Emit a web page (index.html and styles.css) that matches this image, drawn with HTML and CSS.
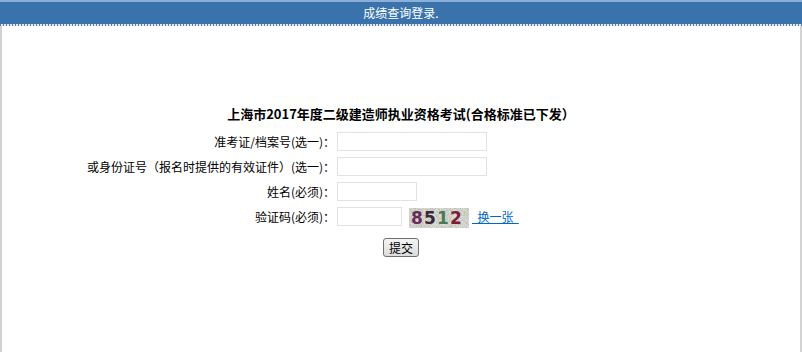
FILE: index.html
```html
<!DOCTYPE html>
<html lang="zh-CN">
<head>
<meta charset="utf-8">
<title>成绩查询登录</title>
<link rel="stylesheet" href="styles.css">
</head>
<body>
<div class="page">
  <div class="topline"></div>
  <div class="header">成绩查询登录.</div>
  <div class="dots"></div>
  <div class="main">
    <h1 class="title">上海市2017年度二级建造师执业资格考试(合格标准已下发）</h1>
    <div class="form">
      <label class="lbl">准考证/档案号(选一)：</label>
      <div class="field"><input class="inp inp-long" type="text"></div>
      <label class="lbl">或身份证号（报名时提供的有效证件）(选一)：</label>
      <div class="field"><input class="inp inp-long" type="text"></div>
      <label class="lbl">姓名(必须)：</label>
      <div class="field"><input class="inp inp-mid" type="text"></div>
      <label class="lbl">验证码(必须)：</label>
      <div class="field field-code">
        <input class="inp inp-short" type="text">
        <svg class="captcha" width="60" height="20" viewBox="0 0 60 20">
          <defs>
            <filter id="noise" x="0" y="0" width="100%" height="100%">
              <feTurbulence type="fractalNoise" baseFrequency="1.2" numOctaves="2" seed="7"/>
              <feColorMatrix type="matrix" values="0 0 0 0 0.42  0 0 0 0 0.5  0 0 0 0 0.42  0 0 0 3 -1.3"/>
            </filter>
            <filter id="noise2" x="0" y="0" width="100%" height="100%">
              <feTurbulence type="fractalNoise" baseFrequency="1.1" numOctaves="1" seed="21"/>
              <feColorMatrix type="matrix" values="0 0 0 0 0.88  0 0 0 0 0.72  0 0 0 0 0.78  0 0 0 3 -1.3"/>
            </filter>
          </defs>
          <rect width="60" height="20" fill="#d6d8d0"/>
          <rect width="60" height="20" filter="url(#noise2)"/>
          <rect width="60" height="20" filter="url(#noise)"/>
          <text x="2" y="16" class="cd" fill="#6b2a5c">8</text>
          <text x="15" y="16" class="cd" fill="#3a2836">5</text>
          <text x="28" y="16" class="cd" fill="#4b7855">1</text>
          <text x="41" y="16" class="cd" fill="#7a2035">2</text>
        </svg>
        <a class="change" href="#">&nbsp;&nbsp;换一张&nbsp;&nbsp;</a>
      </div>
    </div>
    <div class="actions"><button class="btn" type="button">提交</button></div>
  </div>
</div>
</body>
</html>
```

FILE: styles.css
```css
html, body {
  margin: 0;
  padding: 0;
  background: #ffffff;
}

body {
  font-family: "Noto Sans CJK SC", "Liberation Sans", sans-serif;
  font-size: 12px;
  color: #000;
}

.page {
  width: 802px;
  height: 352px;
  display: flex;
  flex-direction: column;
  overflow: hidden;
}

.topline {
  height: 2px;
  background: #8bafd8;
}

.header {
  height: 22px;
  line-height: 22px;
  background: #3a73ab;
  color: #ffffff;
  text-align: center;
  font-size: 12px;
}

.dots {
  height: 2px;
  background: repeating-linear-gradient(90deg, #5a7ca3 0 1px, #e4eaf1 1px 3px);
}

.main {
  flex: 1;
  border-left: 2px solid #d3d3d3;
  border-right: 2px solid #d3d3d3;
  display: flex;
  flex-direction: column;
}

.title {
  margin: 78px 0 5px;
  font-size: 13px;
  line-height: 20px;
  font-weight: bold;
  text-align: center;
}

.form {
  display: grid;
  grid-template-columns: 333px 1fr;
  grid-auto-rows: 25px;
  column-gap: 2px;
  align-items: center;
}

.lbl {
  text-align: right;
  line-height: 25px;
  white-space: nowrap;
}

.field {
  display: flex;
  align-items: center;
}

.inp {
  box-sizing: border-box;
  height: 19px;
  margin: 0;
  padding: 0 2px;
  border: 1px solid #e2e2e2;
  background: #fff;
  font-size: 12px;
  outline: none;
}

.inp-long { width: 150px; }
.inp-mid { width: 80px; }
.inp-short { width: 65px; }

.captcha {
  display: block;
  margin-left: 7px;
  margin-top: 2px;
}

.cd {
  font-family: "DejaVu Sans", sans-serif;
  font-size: 17px;
  font-weight: bold;
}

.change {
  margin-left: 3px;
  color: #0066cc;
  text-decoration: underline;
  font-size: 12px;
  line-height: 16px;
}

.actions {
  margin-top: 9px;
  display: flex;
  justify-content: center;
}

.btn {
  box-sizing: border-box;
  width: 36px;
  height: 19px;
  padding: 0;
  border: 1px solid #707070;
  border-radius: 3px;
  background: linear-gradient(#f4f4f4, #dcdcdc);
  font-family: "Noto Sans CJK SC", sans-serif;
  font-size: 12px;
  line-height: 17px;
  color: #000;
}
```
